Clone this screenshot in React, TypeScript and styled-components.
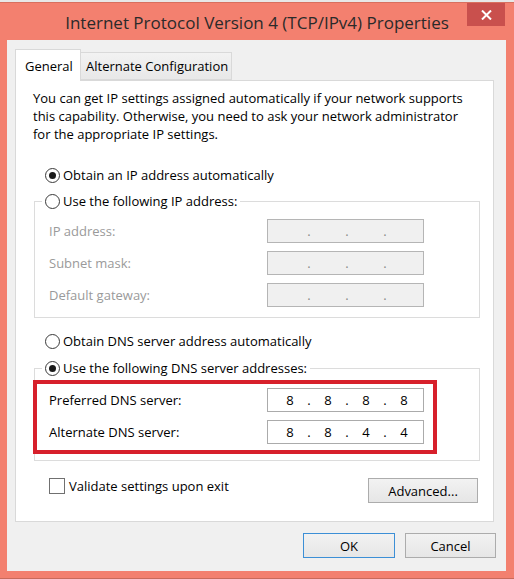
import React from "react";
import styled, { createGlobalStyle } from "styled-components";

const GlobalStyle = createGlobalStyle`
    body {
        margin: 0;
        background: #e8e8e8;
        font-family: "Open Sans", "Noto Sans", sans-serif;
    }
`;

export default function App() {
    return (
        <>
            <GlobalStyle />
            <Window>
                <TitleBar>
                    <span />
                    <Title>Internet Protocol Version 4 (TCP/IPv4) Properties</Title>
                    <CloseButton>
                        <svg width="11" height="10" viewBox="0 0 11 10">
                            <path d="M1 0.5 L10 9.5 M10 0.5 L1 9.5" stroke="#fff" strokeWidth="2" />
                        </svg>
                    </CloseButton>
                </TitleBar>
                <Client>
                    <TabStrip>
                        <Tab $active>General</Tab>
                        <Tab>Alternate Configuration</Tab>
                    </TabStrip>
                    <Panel>
                        <Description>
                            You can get IP settings assigned automatically if your network supports
                            <br />
                            this capability. Otherwise, you need to ask your network administrator
                            <br />
                            for the appropriate IP settings.
                        </Description>

                        <RadioRow $top={22}>
                            <Radio $checked />
                            Obtain an IP address automatically
                        </RadioRow>
                        <Group $top={6} $pad="8px 0 10px 7px">
                            <Legend>
                                <Radio />
                                Use the following IP address:
                            </Legend>
                            <Rows>
                                <FieldRow>
                                    <FieldLabel $disabled>IP address:</FieldLabel>
                                    <IpField disabled />
                                </FieldRow>
                                <FieldRow>
                                    <FieldLabel $disabled>Subnet mask:</FieldLabel>
                                    <IpField disabled />
                                </FieldRow>
                                <FieldRow>
                                    <FieldLabel $disabled>Default gateway:</FieldLabel>
                                    <IpField disabled />
                                </FieldRow>
                            </Rows>
                        </Group>

                        <RadioRow $top={13}>
                            <Radio />
                            Obtain DNS server address automatically
                        </RadioRow>
                        <Group $top={7} $pad="1px 0 6px 7px">
                            <Legend>
                                <Radio $checked />
                                Use the following DNS server addresses:
                            </Legend>
                            <Highlight>
                                <Rows>
                                    <FieldRow>
                                        <FieldLabel>Preferred DNS server:</FieldLabel>
                                        <IpField value={["8", "8", "8", "8"]} />
                                    </FieldRow>
                                    <FieldRow>
                                        <FieldLabel>Alternate DNS server:</FieldLabel>
                                        <IpField value={["8", "8", "4", "4"]} />
                                    </FieldRow>
                                </Rows>
                            </Highlight>
                        </Group>

                        <BottomRow>
                            <CheckLabel>
                                <CheckBox />
                                Validate settings upon exit
                            </CheckLabel>
                            <Button $w={110}>Advanced...</Button>
                        </BottomRow>
                    </Panel>
                    <Footer>
                        <Button $w={92} $primary>OK</Button>
                        <Button $w={91}>Cancel</Button>
                    </Footer>
                </Client>
            </Window>
        </>
    );
}

function IpField({ value, disabled }: { value?: string[]; disabled?: boolean }) {
    const octets = value ?? ["", "", "", ""];
    return (
        <IpBox $disabled={disabled}>
            {octets.map((o, i) => (
                <React.Fragment key={i}>
                    {i > 0 && <Dot>.</Dot>}
                    <Octet>{o}</Octet>
                </React.Fragment>
            ))}
        </IpBox>
    );
}

const Window = styled.div`
    box-sizing: border-box;
    width: 514px;
    height: 577px;
    margin-top: 2px;
    background: #f3806f;
    border-top: 1px solid #d8705f;
    border-bottom: 1px solid #c86a5b;
    display: flex;
    flex-direction: column;
`;

const TitleBar = styled.div`
    height: 37px;
    display: grid;
    grid-template-columns: 1fr auto 1fr;
`;

const Title = styled.div`
    align-self: center;
    margin-top: 1px;
    font-size: 17px;
    color: #2a2a2a;
    white-space: nowrap;
`;

const CloseButton = styled.div`
    justify-self: end;
    width: 38px;
    height: 23px;
    margin: 0 9px 0 0;
    background: #c9504d;
    display: flex;
    align-items: center;
    justify-content: center;
`;

const Client = styled.div`
    flex: 1;
    margin: 0 8px 7px 7px;
    padding: 9px 10px 13px 8px;
    background: #f0f0f0;
    display: flex;
    flex-direction: column;
    font-size: 13px;
    color: #000;
    white-space: nowrap;
`;

const TabStrip = styled.div`
    height: 31px;
    display: flex;
    align-items: flex-end;
`;

const Tab = styled.div<{ $active?: boolean }>`
    box-sizing: border-box;
    position: relative;
    z-index: ${(p) => (p.$active ? 1 : 0)};
    height: ${(p) => (p.$active ? "32px" : "28px")};
    margin-bottom: ${(p) => (p.$active ? "-1px" : "0")};
    padding: 0 ${(p) => (p.$active ? "9px" : "5px")};
    display: flex;
    align-items: center;
    background: ${(p) => (p.$active ? "#ffffff" : "linear-gradient(#f2f2f2, #e8e8e8)")};
    border: 1px solid #d9d9d9;
    border-bottom: ${(p) => (p.$active ? "none" : "1px solid #d9d9d9")};
    border-left: ${(p) => (p.$active ? "1px solid #d9d9d9" : "none")};
    width: ${(p) => (p.$active ? "66px" : "151px")};
`;

const Panel = styled.div`
    box-sizing: border-box;
    height: 442px;
    margin-right: 2px;
    padding: 0 13px 0 17px;
    background: #fff;
    border: 1px solid #d9d9d9;
    display: flex;
    flex-direction: column;
`;

const Description = styled.div`
    margin-top: 8px;
    line-height: 18px;
`;

const RadioRow = styled.div<{ $top: number }>`
    margin: ${(p) => p.$top}px 0 0 12px;
    height: 20px;
    display: flex;
    align-items: center;
    gap: 3px;
`;

const Radio = styled.span<{ $checked?: boolean }>`
    box-sizing: border-box;
    width: 15px;
    height: 15px;
    border: 1px solid #3a3a3a;
    border-radius: 50%;
    background: #fff;
    display: flex;
    align-items: center;
    justify-content: center;
    &::after {
        content: "";
        width: 7px;
        height: 7px;
        border-radius: 50%;
        background: #1a1a1a;
        display: ${(p) => (p.$checked ? "block" : "none")};
    }
`;

const Group = styled.fieldset<{ $top: number; $pad: string }>`
    min-width: 0;
    margin: ${(p) => p.$top}px 0 0 1px;
    padding: ${(p) => p.$pad};
    border: 1px solid #dcdcdc;
`;

const Legend = styled.legend`
    height: 20px;
    padding: 0 3px;
    display: flex;
    align-items: center;
    gap: 3px;
`;

const Rows = styled.div`
    display: flex;
    flex-direction: column;
    gap: 8px;
`;

const FieldRow = styled.div`
    height: 24px;
    padding-left: 7px;
    display: grid;
    grid-template-columns: 218px 157px;
    align-items: center;
`;

const FieldLabel = styled.span<{ $disabled?: boolean }>`
    color: ${(p) => (p.$disabled ? "#9a9a9a" : "#000")};
`;

const IpBox = styled.div<{ $disabled?: boolean }>`
    box-sizing: border-box;
    height: 24px;
    padding-left: 7px;
    display: flex;
    align-items: center;
    background: ${(p) => (p.$disabled ? "#f0f0f0" : "#fff")};
    border: 1px solid ${(p) => (p.$disabled ? "#b5b5b5" : "#ababab")};
    color: ${(p) => (p.$disabled ? "#8a8a8a" : "#000")};
`;

const Octet = styled.span`
    width: 30px;
    text-align: center;
`;

const Dot = styled.span`
    width: 8px;
    text-align: center;
`;

const Highlight = styled.div`
    box-sizing: border-box;
    width: 404px;
    margin: 1px 0 0 -9px;
    padding: 4px 0 6px 5px;
    border: 4px solid #d7202b;
`;

const BottomRow = styled.div`
    margin: 17px 2px 0 0;
    display: flex;
    justify-content: space-between;
    align-items: flex-start;
`;

const CheckLabel = styled.div`
    margin: 0 0 0 16px;
    height: 16px;
    display: flex;
    align-items: center;
    gap: 4px;
`;

const CheckBox = styled.span`
    box-sizing: border-box;
    width: 16px;
    height: 16px;
    border: 1px solid #707070;
    background: #fff;
`;

const Button = styled.div<{ $w: number; $primary?: boolean }>`
    box-sizing: border-box;
    width: ${(p) => p.$w}px;
    height: 25px;
    display: flex;
    align-items: center;
    justify-content: center;
    background: linear-gradient(#f2f2f2, #e6e6e6);
    border: 1px solid ${(p) => (p.$primary ? "#3c8fd6" : "#acacac")};
`;

const Footer = styled.div`
    margin-top: 11px;
    display: flex;
    justify-content: flex-end;
    gap: 10px;
`;
